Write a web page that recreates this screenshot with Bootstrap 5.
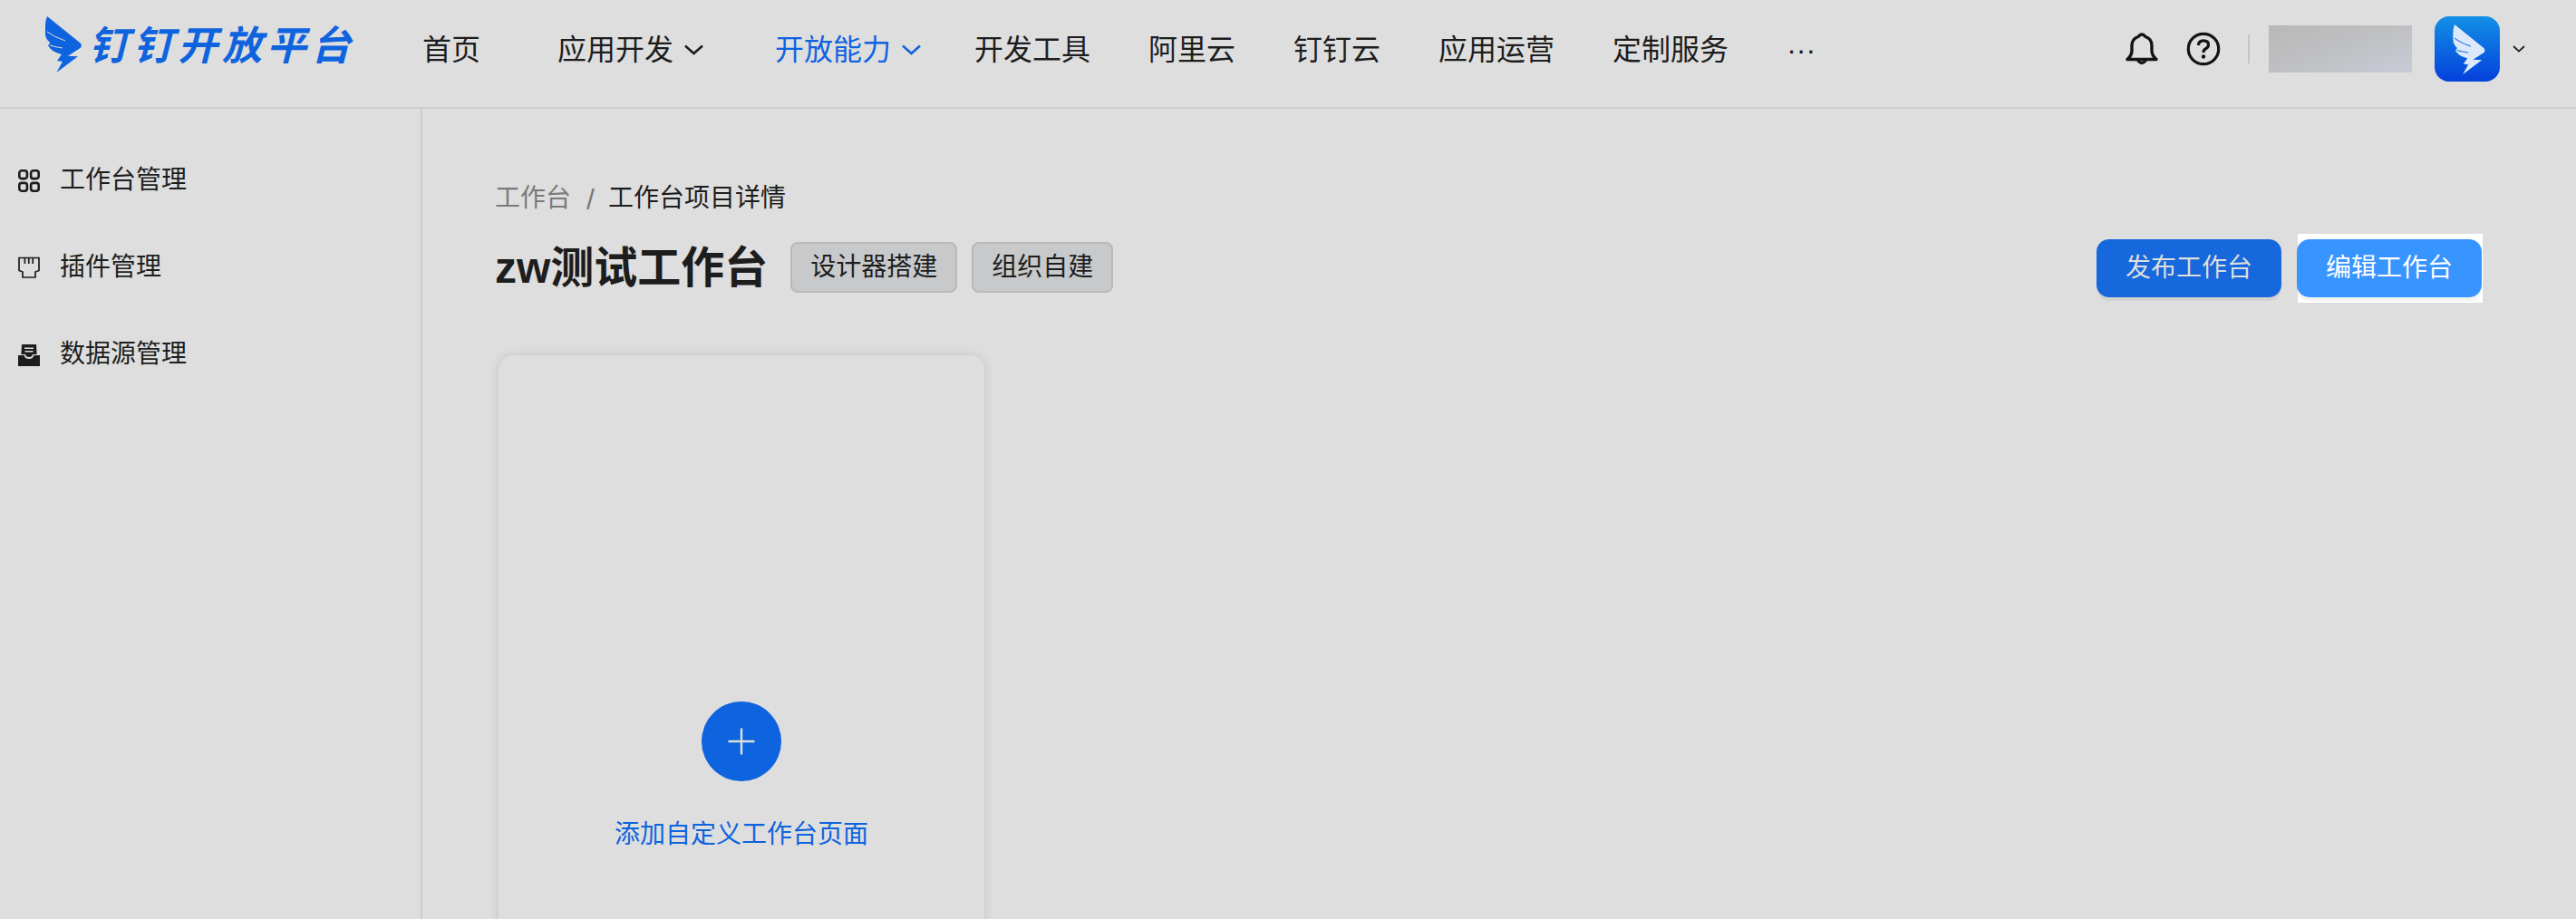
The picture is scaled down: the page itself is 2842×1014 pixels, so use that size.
<!DOCTYPE html>
<html lang="zh-CN">
<head>
  <meta charset="UTF-8" />
  <meta name="viewport" content="width=device-width, initial-scale=1.0" />
  <title>钉钉开放平台</title>
  <link href="https://cdn.jsdelivr.net/npm/bootstrap@5.3.0/dist/css/bootstrap.min.css" rel="stylesheet">
  <style>
    html, body { height: 100%; }
    body {
      background: #dedede;
      color: #1d1d1d;
      font-family: "Liberation Sans", "Noto Sans CJK SC", sans-serif;
      overflow: hidden;
    }
    .top-bar { height: 120px; border-bottom: 2px solid #cccccc; padding: 0 56px 0 50px; }
    .logo-wing { width: 40px; height: 62px; margin-top: -20px; flex-shrink: 0; }
    .logo-text {
      color: #0e63de; font-size: 44px; font-weight: 700; font-style: italic;
      letter-spacing: 5px; line-height: 1; margin-left: 8px; margin-top: -16px;
    }
    .top-links { margin-left: 74px; margin-top: -8px; }
    .top-links .nav-link { color: #1d1d1d; font-size: 32px; line-height: 40px; padding: 0; margin-right: 64px; }
    .top-links .nav-link.is-on { color: #0e63de; }
    .top-links .first-link { margin-right: 85px; }
    .top-links .menu-dev { margin-right: 79px; }
    .top-links .menu-open { margin-right: 59px; }
    .down-mark { width: 21px; height: 12px; margin-left: 12px; }
    .more-dots { font-size: 24px; letter-spacing: 0; }
    .top-right { margin-top: -10px; }
    .bell-mark { width: 36px; height: 36px; margin-right: 31px; }
    .help-mark { width: 38px; height: 38px; }
    .v-line { width: 2px; height: 32px; background: #c4c4c4; margin: 0 21px 0 30px; }
    .user-blur { width: 158px; height: 52px; background: linear-gradient(160deg, #b8b8b8, #bfc0c2 50%, #c8ccd8); }
    .app-badge {
      width: 72px; height: 72px; margin-left: 25px; border-radius: 16px; flex-shrink: 0;
      background: linear-gradient(180deg, #1290e6, #0540dc);
    }
    .app-badge svg { width: 36px; height: 55px; margin-left: 4px; }
    .small-down { width: 14px; height: 8px; margin-left: 14px; }

    .page-body { height: 894px; overflow: hidden; }
    .side-menu { width: 466px; border-right: 2px solid #cccccc; padding: 31px 20px 0; flex-shrink: 0; }
    .side-row { height: 96px; font-size: 28px; gap: 23px; }
    .side-row span { margin-left: -1px; }
    .side-row svg { width: 24px; height: 25px; }

    .work-area { padding: 79px 103px 0 80px; min-width: 0; flex-grow: 1; }
    .crumb-line { font-size: 28px; line-height: 40px; height: 40px; }
    .crumb-line .crumb-up { color: #7a7a7a; }
    .crumb-line .crumb-sep { color: #7a7a7a; font-size: 32px; line-height: 38px; margin: 2px 15px 0 17px; }
    .head-row { margin-top: 19px; height: 76px; }
    .page-title { font-size: 48px; font-weight: 600; line-height: 60px; margin: 0 25px 0 0; }
    .tag-box {
      font-size: 28px; line-height: 52px; padding: 0 20px; margin: -2px 16px 0 0;
      background: #c8c9cb; border: 2px solid #b8b9bb; border-radius: 8px;
    }
    .act-btn {
      width: 204px; height: 64px; padding: 0; font-size: 28px; border: 0; border-radius: 14px;
      box-shadow: 0 4px 0 rgba(0, 0, 0, .05);
    }
    .act-publish { background: #1668dc; color: #dedede; margin-right: 18px; }
    .act-edit { background: #3895ff; color: #fff; margin-left: -2px; }
    .spot-box { background: #fff; padding: 6px 1px; }
    .add-card {
      width: 536px; height: 700px; margin: 58px 0 0 4px; padding-top: 382px;
      background: #dedede; border: 0; border-radius: 16px;
      box-shadow: 0 0 12px rgba(0, 0, 0, .12);
    }
    .add-circle { width: 88px; height: 88px; background: #0e63de; }
    .add-circle svg { width: 30px; height: 30px; }
    .add-text { color: #0e63de; font-size: 28px; line-height: 40px; margin-top: 39px; }
  </style>
</head>
<body>
  <svg width="0" height="0" class="d-block">
    <defs>
      <symbol id="wing" viewBox="0 0 40 62">
        <path d="M2 0 L38 29 Q41.5 32 38.5 35 L25 43.7 L36 44.3 L12.3 62 L19 50 L13 49 L18 42 Q6 39 3 32 Q7 29 3 27 Q-1 22 0 17 Q-1 8 2 0Z" />
      </symbol>
    </defs>
  </svg>

  <header class="top-bar d-flex align-items-center">
    <svg class="logo-wing" viewBox="0 0 40 62">
      <use href="#wing" fill="#0e63de" />
      <path d="M2 17 Q10 23 22 27 M5 32 Q12 34 19 35" fill="none" stroke="#dedede" stroke-width="1" />
    </svg>
    <span class="logo-text">钉钉开放平台</span>
    <ul class="nav top-links align-items-center flex-nowrap">
      <li class="nav-item"><a class="nav-link first-link" href="#">首页</a></li>
      <li class="nav-item">
        <a class="nav-link menu-dev d-flex align-items-center" href="#">应用开发
          <svg class="down-mark" viewBox="0 0 21 12"><path d="M1 1.5 L10.5 10 L20 1.5" fill="none" stroke="#1d1d1d" stroke-width="2.6" /></svg>
        </a>
      </li>
      <li class="nav-item">
        <a class="nav-link menu-open is-on d-flex align-items-center" href="#">开放能力
          <svg class="down-mark" viewBox="0 0 21 12"><path d="M1 1.5 L10.5 10 L20 1.5" fill="none" stroke="#0e63de" stroke-width="2.6" /></svg>
        </a>
      </li>
      <li class="nav-item"><a class="nav-link" href="#">开发工具</a></li>
      <li class="nav-item"><a class="nav-link" href="#">阿里云</a></li>
      <li class="nav-item"><a class="nav-link" href="#">钉钉云</a></li>
      <li class="nav-item"><a class="nav-link" href="#">应用运营</a></li>
      <li class="nav-item"><a class="nav-link" href="#">定制服务</a></li>
      <li class="nav-item"><a class="nav-link more-dots" href="#">···</a></li>
    </ul>

    <div class="top-right ms-auto d-flex align-items-center">
      <svg class="bell-mark" viewBox="0 0 36 36" fill="none" stroke="#141414" stroke-width="3.4" stroke-linejoin="round" stroke-linecap="round">
        <path d="M2 29.5 H34 Q29 25 29 20 V14 Q29 7 22 4.5 Q18 -0.5 14 4.5 Q7 7 7 14 V20 Q7 25 2 29.5Z" />
        <path d="M14 31 Q18 36 22 31" />
      </svg>
      <svg class="help-mark" viewBox="0 0 38 38">
        <circle cx="19" cy="19" r="16.7" fill="none" stroke="#141414" stroke-width="3.2" />
        <path d="M13.5 15 Q13.5 9.8 19 9.8 Q24.5 9.8 24.5 14.6 Q24.5 17.4 21.5 18.8 Q19 20 19 23" fill="none" stroke="#141414" stroke-width="3.2" />
        <circle cx="19" cy="27.5" r="2.2" fill="#141414" />
      </svg>
      <span class="v-line"></span>
      <div class="user-blur"></div>
      <div class="app-badge d-flex align-items-center justify-content-center">
        <svg viewBox="0 0 40 62"><use href="#wing" fill="#dce9fb" /><path d="M2 17 Q10 23 22 27 M5 32 Q12 34 19 35" fill="none" stroke="#1a70e0" stroke-width="1.2" /></svg>
      </div>
      <svg class="small-down" viewBox="0 0 14 8"><path d="M1 1 L7 6.6 L13 1" fill="none" stroke="#1d1d1d" stroke-width="1.8" /></svg>
    </div>
  </header>

  <div class="page-body d-flex">
    <aside class="side-menu">
      <div class="side-row d-flex align-items-center">
        <svg viewBox="0 0 24 25" fill="none" stroke="#1d1d1d" stroke-width="2.6">
          <rect x="1.3" y="1.3" width="8.6" height="8.8" rx="2.6" /><rect x="14.1" y="1.3" width="8.6" height="8.8" rx="2.6" />
          <rect x="1.3" y="14.9" width="8.6" height="8.8" rx="2.6" /><rect x="14.1" y="14.9" width="8.6" height="8.8" rx="2.6" />
        </svg>
        <span>工作台管理</span>
      </div>
      <div class="side-row d-flex align-items-center">
        <svg viewBox="0 0 24 25" fill="none" stroke="#1d1d1d" stroke-width="1.7">
          <path d="M1 1.5 H23 V15.5 L19 17 V23 H5 V17 L1 15.5Z" />
          <path d="M7.4 2 V8 M11.8 2 V8 M16.2 2 V8" />
        </svg>
        <span>插件管理</span>
      </div>
      <div class="side-row d-flex align-items-center">
        <svg viewBox="0 0 24 25">
          <path d="M4 1 H20 L20.6 12 H16 Q15.5 15 12 15 Q8.5 15 8 12 H3.4Z M7 4.5 V6 H17 V4.5Z M7.5 8 V9.5 H16.5 V8Z" fill="#1d1d1d" fill-rule="evenodd" />
          <path d="M0 13 H6.6 Q7.5 17 12 17 Q16.5 17 17.4 13 H24 V25 H0Z" fill="#1d1d1d" />
        </svg>
        <span>数据源管理</span>
      </div>
    </aside>

    <main class="work-area">
      <div class="crumb-line d-flex">
        <span class="crumb-up">工作台</span><span class="crumb-sep">/</span><span>工作台项目详情</span>
      </div>
      <div class="head-row d-flex align-items-center">
        <h1 class="page-title">zw测试工作台</h1>
        <span class="tag-box">设计器搭建</span>
        <span class="tag-box">组织自建</span>
        <div class="ms-auto d-flex align-items-center">
          <button type="button" class="btn act-btn act-publish">发布工作台</button>
          <div class="spot-box">
            <button type="button" class="btn act-btn act-edit">编辑工作台</button>
          </div>
        </div>
      </div>
      <div class="card add-card align-items-center">
        <div class="add-circle rounded-circle d-flex align-items-center justify-content-center">
          <svg viewBox="0 0 30 30"><path d="M15 1.5 V28.5 M1.5 15 H28.5" stroke="#dedede" stroke-width="2.4" stroke-linecap="round" /></svg>
        </div>
        <div class="add-text">添加自定义工作台页面</div>
      </div>
    </main>
  </div>
</body>
</html>
